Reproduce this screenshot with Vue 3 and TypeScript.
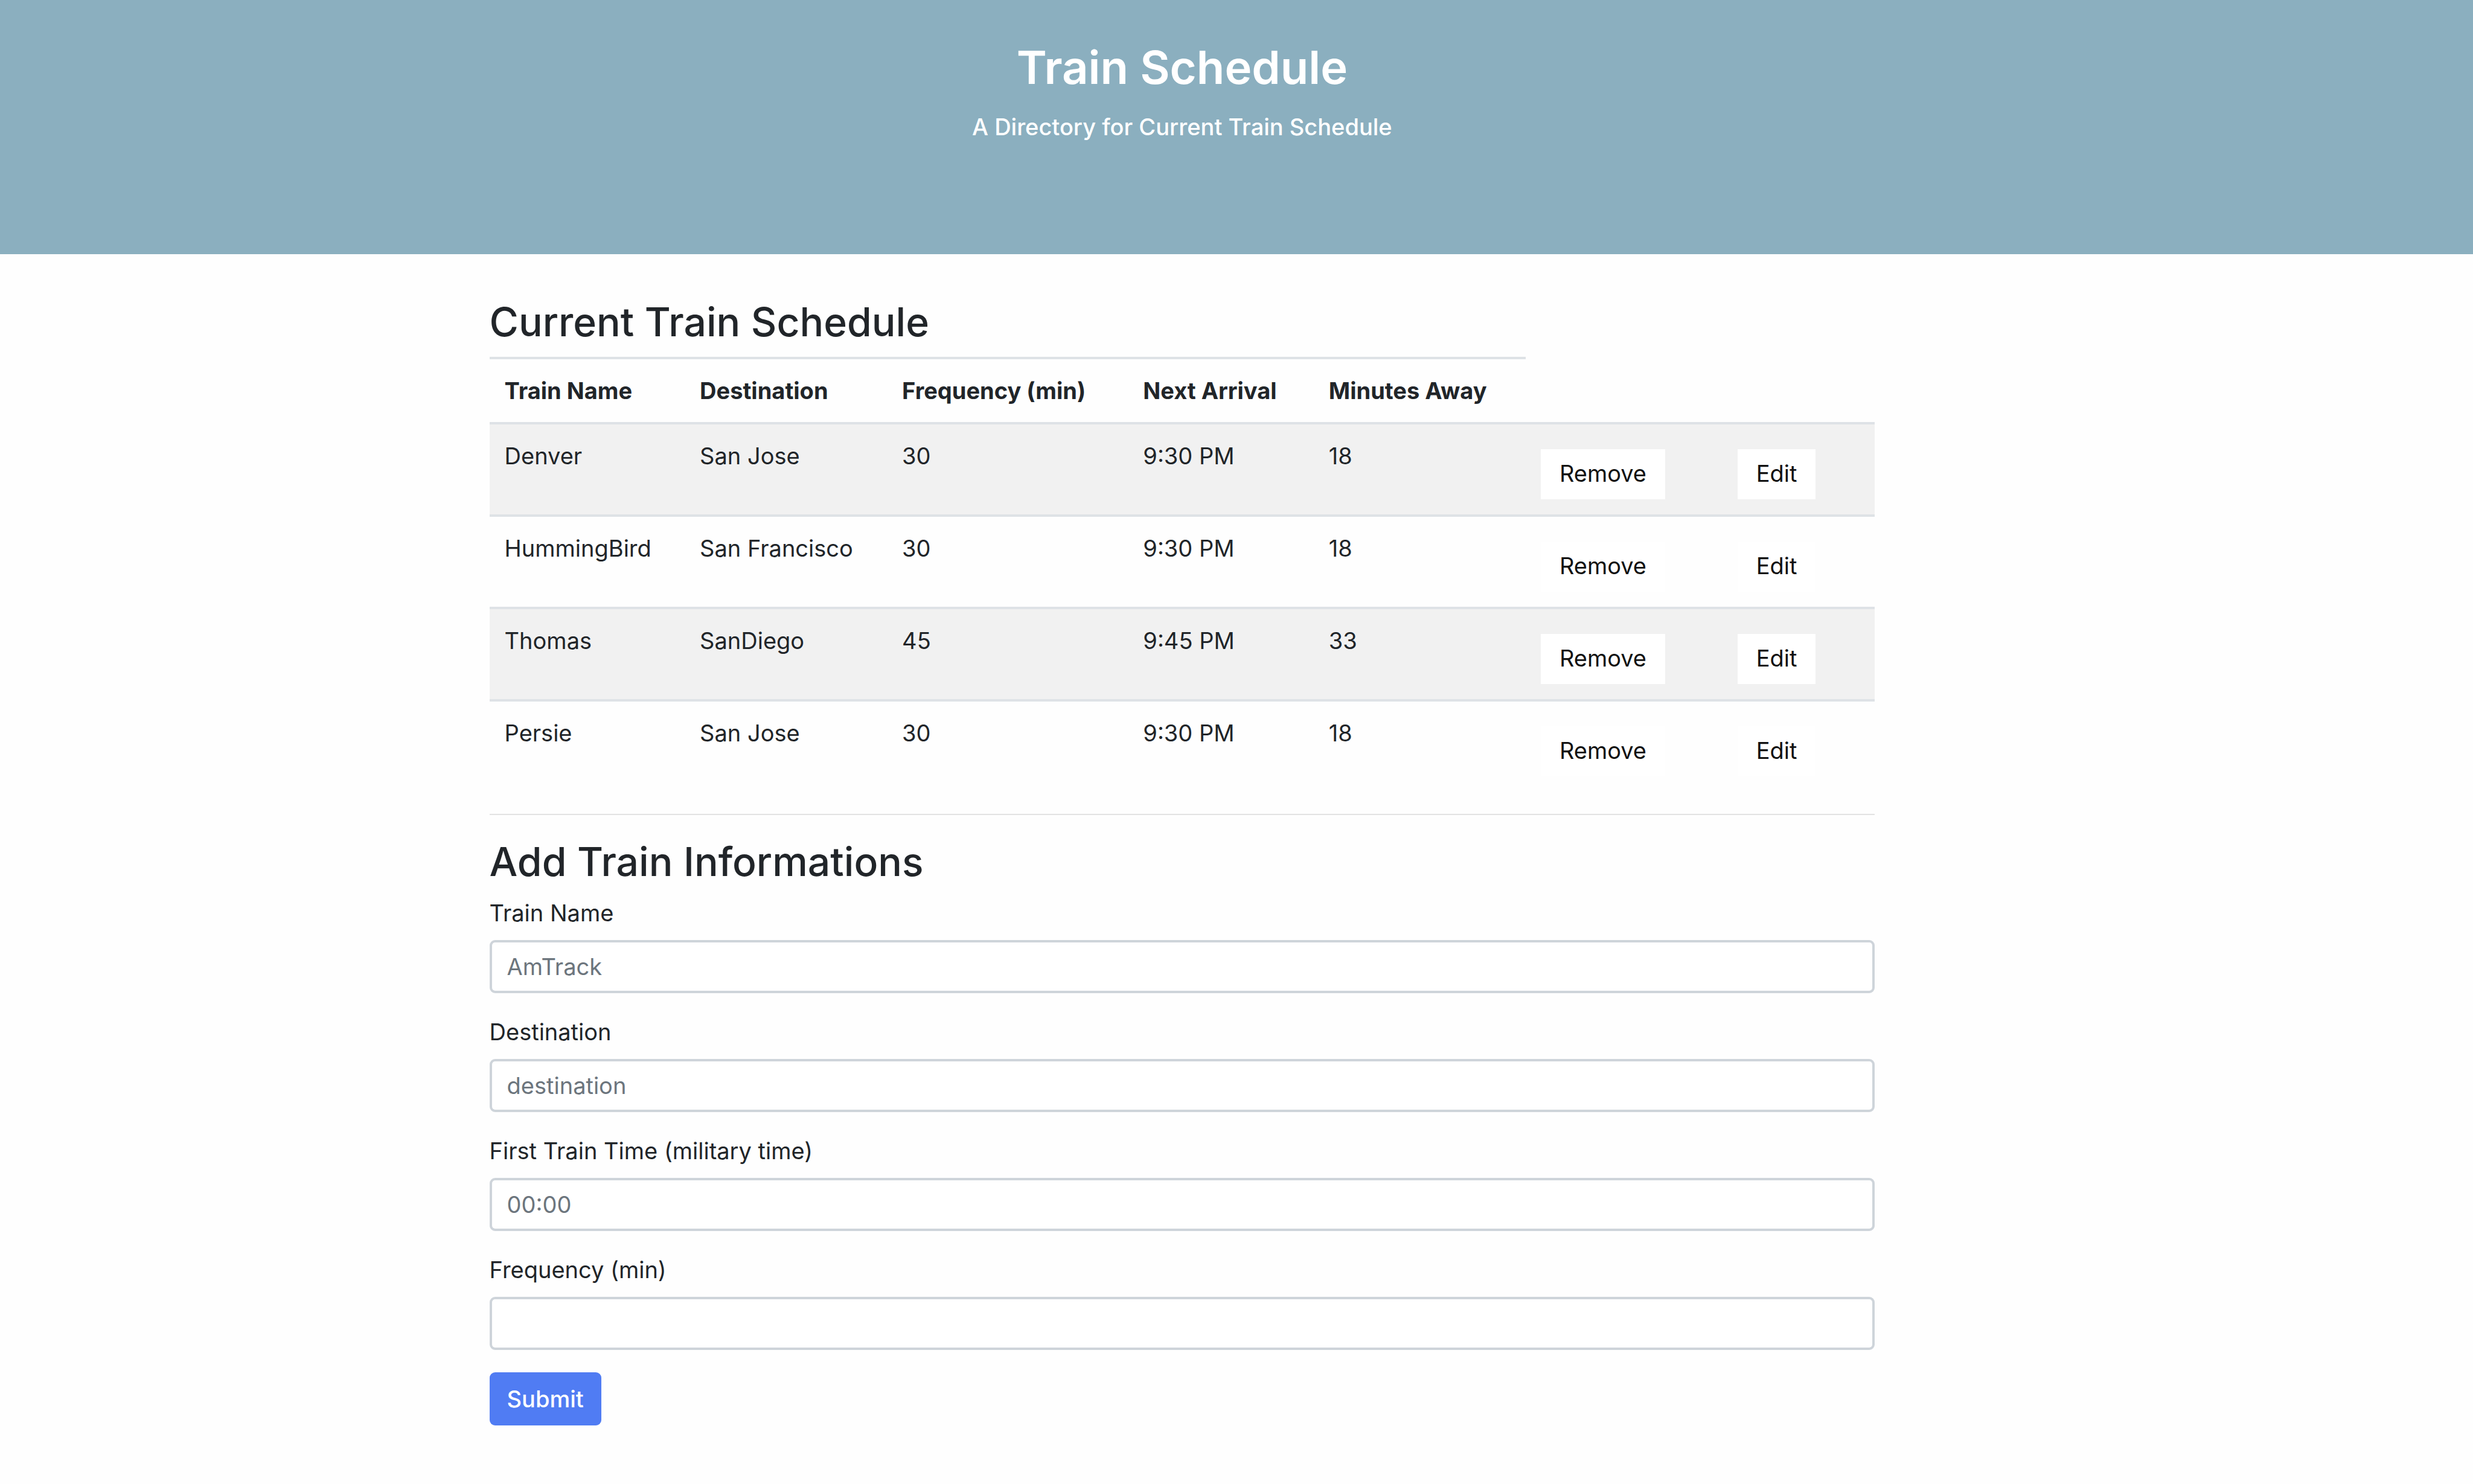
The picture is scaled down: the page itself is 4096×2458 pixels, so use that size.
<script setup lang="ts">
import { ref, reactive } from 'vue'

interface Train {
  name: string
  destination: string
  frequency: number
  nextArrival: string
  minutesAway: number
}

interface Field {
  id: 'name' | 'destination' | 'firstTime' | 'frequency'
  label: string
  placeholder: string
}

const headings: string[] = ['Train Name', 'Destination', 'Frequency (min)', 'Next Arrival', 'Minutes Away']

const trains = ref<Train[]>([
  { name: 'Denver', destination: 'San Jose', frequency: 30, nextArrival: '9:30 PM', minutesAway: 18 },
  { name: 'HummingBird', destination: 'San Francisco', frequency: 30, nextArrival: '9:30 PM', minutesAway: 18 },
  { name: 'Thomas', destination: 'SanDiego', frequency: 45, nextArrival: '9:45 PM', minutesAway: 33 },
  { name: 'Persie', destination: 'San Jose', frequency: 30, nextArrival: '9:30 PM', minutesAway: 18 },
])

const fields: Field[] = [
  { id: 'name', label: 'Train Name', placeholder: 'AmTrack' },
  { id: 'destination', label: 'Destination', placeholder: 'destination' },
  { id: 'firstTime', label: 'First Train Time (military time)', placeholder: '00:00' },
  { id: 'frequency', label: 'Frequency (min)', placeholder: '' },
]

const form = reactive({ name: '', destination: '', firstTime: '', frequency: '' })

// Minutes since midnight for an "HH:MM" string
function toMinutes(time: string): number {
  const [h, m] = time.split(':').map(Number)
  return h * 60 + m
}

function clock(minutes: number): string {
  const h = Math.floor(minutes / 60) % 24
  const m = String(minutes % 60).padStart(2, '0')
  return `${h % 12 || 12}:${m} ${h < 12 ? 'AM' : 'PM'}`
}

function addTrain(): void {
  const frequency = Number(form.frequency)
  const start = toMinutes(form.firstTime)
  if (!form.name || !form.destination || !(frequency > 0) || Number.isNaN(start)) return
  const now = new Date()
  const elapsed = now.getHours() * 60 + now.getMinutes()
  const away = start > elapsed ? start - elapsed : frequency - ((elapsed - start) % frequency)
  trains.value.push({
    name: form.name,
    destination: form.destination,
    frequency,
    nextArrival: clock(elapsed + away),
    minutesAway: away,
  })
  Object.assign(form, { name: '', destination: '', firstTime: '', frequency: '' })
}

function removeTrain(index: number): void {
  trains.value.splice(index, 1)
}

function editTrain(index: number): void {
  const train = trains.value[index]
  form.name = train.name
  form.destination = train.destination
  form.frequency = String(train.frequency)
}
</script>

<template>
  <div class="page">
    <header class="banner">
      <div class="frame">
        <h1>Train Schedule</h1>
        <p>A Directory for Current Train Schedule</p>
      </div>
    </header>

    <div class="frame">
      <main class="container">
        <section>
          <h2>Current Train Schedule</h2>
          <table>
            <colgroup>
              <col class="c-name" /><col class="c-dest" /><col class="c-freq" /><col class="c-next" />
              <col class="c-away" /><col class="c-remove" /><col class="c-edit" />
            </colgroup>
            <thead>
              <tr>
                <th v-for="heading in headings" :key="heading" scope="col">{{ heading }}</th>
              </tr>
            </thead>
            <tbody>
              <tr v-for="(train, i) in trains" :key="i">
                <td>{{ train.name }}</td>
                <td>{{ train.destination }}</td>
                <td>{{ train.frequency }}</td>
                <td>{{ train.nextArrival }}</td>
                <td>{{ train.minutesAway }}</td>
                <td><button class="row-btn" type="button" @click="removeTrain(i)">Remove</button></td>
                <td><button class="row-btn" type="button" @click="editTrain(i)">Edit</button></td>
              </tr>
            </tbody>
          </table>
        </section>

        <hr />

        <section>
          <h2>Add Train Informations</h2>
          <form @submit.prevent="addTrain">
            <div v-for="field in fields" :key="field.id" class="group">
              <label :for="field.id">{{ field.label }}</label>
              <input :id="field.id" v-model="form[field.id]" type="text" :placeholder="field.placeholder" />
            </div>
            <button class="submit" type="submit">Submit</button>
          </form>
        </section>
      </main>
    </div>
  </div>
</template>

<style>
body {
  margin: 0;
  background: #fefefe;
}
</style>

<style scoped>
.page,
.page * {
  box-sizing: border-box;
}

.page {
  font-family: Inter, "Liberation Sans", sans-serif;
  font-size: 38px;
  line-height: 54px;
  color: #212529;
}

.frame {
  width: 95.6%;
}

.banner {
  padding: 62px 0 183px;
  background: #8bafbf;
  color: #fff;
  text-align: center;
}

h1 {
  margin: 0 0 22px;
  font-size: 76px;
  line-height: 98px;
  font-weight: 600;
}

.banner p {
  margin: 0;
  line-height: 56px;
  font-weight: 500;
}

.container {
  width: 58.6%;
  margin: 0 auto;
  padding: 72px 0;
}

h2 {
  margin: 0 0 18px;
  font-size: 66px;
  line-height: 80px;
  font-weight: 500;
}

table {
  width: 100%;
  table-layout: fixed;
  border-collapse: separate;
  border-spacing: 0;
}

.c-name { width: 14.1%; }
.c-dest { width: 14.6%; }
.c-freq { width: 17.4%; }
.c-next { width: 13.4%; }
.c-away { width: 15.3%; }
.c-remove { width: 14.2%; }
.c-edit { width: 11%; }

th,
td {
  padding: 25px;
  border-top: 4px solid #dee2e6;
  text-align: left;
  vertical-align: top;
  white-space: nowrap;
}

th {
  font-weight: 700;
}

tbody tr:nth-child(odd) {
  background: #f1f1f1;
}

.row-btn {
  display: block;
  height: 83px;
  margin-top: 16px;
  padding: 0 31px 3px;
  border: 0;
  background: #fff;
  color: #111;
  font: inherit;
}

hr {
  height: 2px;
  margin: 37px 0;
  border: 0;
  background: #e2e2e2;
}

.group {
  margin-bottom: 37px;
}

label {
  display: block;
  margin-bottom: 18px;
}

input {
  display: block;
  width: 100%;
  height: 88px;
  padding: 0 25px;
  border: 4px solid #ced4da;
  border-radius: 9px;
  background: #fff;
  color: #495057;
  font: inherit;
}

input::placeholder {
  color: #6c757d;
  opacity: 1;
}

.submit {
  height: 88px;
  padding: 0 29px;
  border: 0;
  border-radius: 9px;
  background: #507cf3;
  color: #fff;
  font: inherit;
  font-weight: 500;
}
</style>
